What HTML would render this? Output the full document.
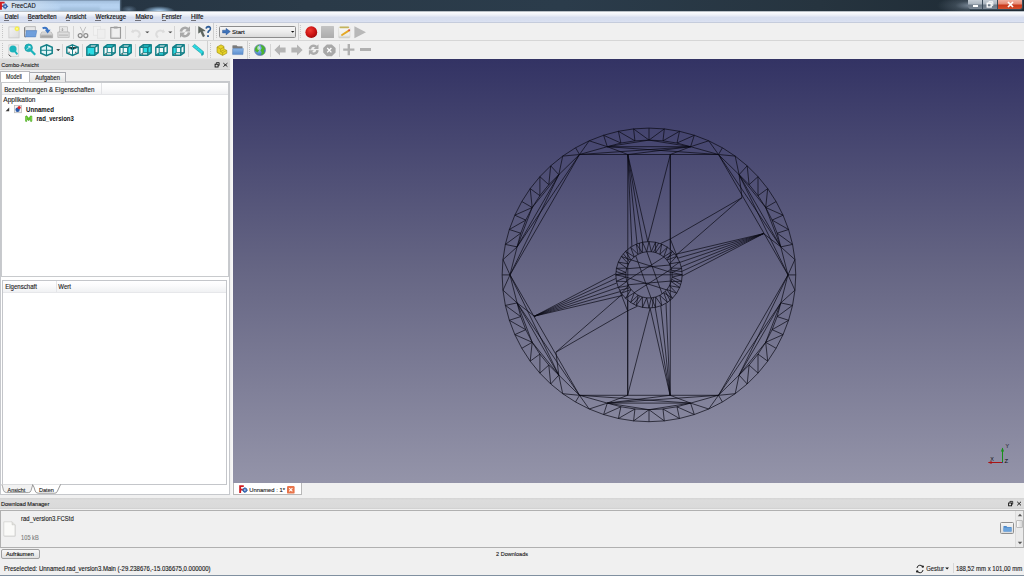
<!DOCTYPE html>
<html><head><meta charset="utf-8"><style>
html,body{margin:0;padding:0;width:1024px;height:576px;overflow:hidden;background:#f0f0f0;position:relative}
.t{position:absolute;white-space:nowrap;line-height:1;font-family:"Liberation Sans",sans-serif}
svg{overflow:visible}
</style></head><body>
<div style="position:absolute;left:0px;top:0px;width:1024px;height:11px;background:linear-gradient(90deg,#243240 0%,#2a3a48 30%,#2b3c4b 55%,#26343f 80%,#1e2a34 100%)"></div>
<div style="position:absolute;left:0px;top:0px;width:120px;height:10.8px;background:linear-gradient(180deg,#6f86a0 0%,#a4c0de 12%,#b4d0ee 40%,#b6d2f0 70%,#aac6e4 92%,#98aec4 100%)"></div>
<div style="position:absolute;left:119px;top:0px;width:3px;height:11px;background:linear-gradient(90deg,rgba(150,180,210,0.6),rgba(40,56,70,0))"></div>
<div style="position:absolute;left:143px;top:4px;width:32px;height:7px;background:radial-gradient(ellipse 50% 70% at 50% 100%,#b4d2f0 0%,rgba(150,190,225,0.7) 45%,rgba(40,56,70,0) 100%)"></div>
<div style="position:absolute;left:121px;top:4px;width:16px;height:7px;background:radial-gradient(ellipse 50% 60% at 50% 80%,rgba(130,160,190,0.55) 0%,rgba(40,56,70,0) 100%)"></div>
<div style="position:absolute;left:60px;top:7px;width:40px;height:3px;background:rgba(120,150,180,0.25);filter:blur(1px)"></div>
<div style="position:absolute;left:0px;top:1px;width:60px;height:9.5px;background:linear-gradient(90deg,rgba(226,234,244,0.85) 0%,rgba(214,228,242,0.6) 45%,rgba(190,214,240,0) 100%)"></div>
<svg style="position:absolute;left:0px;top:0px;" width="10" height="11" viewBox="0 0 10 11"><path d="M0 1.8 H4.6 V3.5 H1.9 V5.4 H4 V7 H1.9 V9.8 H0Z" fill="#d01c20"/><g transform="translate(5.2 6.4)"><circle r="2.1" fill="#3a68b0"/><path d="M-0.6 -2.9 H0.6 V2.9 H-0.6Z M-2.9 -0.6 V0.6 H2.9 V-0.6Z M-2.1 -1.3 L-1.3 -2.1 L2.1 1.3 L1.3 2.1Z M2.1 -1.3 L1.3 -2.1 L-2.1 1.3 L-1.3 2.1Z" fill="#3a68b0"/><circle r="0.8" fill="#c8d8ea"/></g></svg>
<div style="position:absolute;left:915px;top:0px;width:55px;height:11px;background:radial-gradient(ellipse 60% 90% at 100% 50%,rgba(150,165,182,0.75) 0%,rgba(110,125,140,0.35) 45%,rgba(40,52,64,0) 100%)"></div>
<div style="position:absolute;left:967.5px;top:0px;width:55px;height:9.6px;background:#3a4a58;border-radius:0 0 3px 3px"></div>
<div style="position:absolute;left:968.3px;top:0px;width:14px;height:8.8px;background:linear-gradient(180deg,#c4ccd4 0%,#aab4be 45%,#6c7986 55%,#7c8894 100%);border-radius:0 0 0 2.5px"></div>
<div style="position:absolute;left:972.8px;top:5.2px;width:5.6px;height:1.6px;background:#fff;box-shadow:0 0 0.6px #333"></div>
<div style="position:absolute;left:983px;top:0px;width:13.8px;height:8.8px;background:linear-gradient(180deg,#c4ccd4 0%,#aab4be 45%,#6c7986 55%,#7c8894 100%)"></div>
<svg style="position:absolute;left:986px;top:1px;" width="8" height="7" viewBox="0 0 8 7"><rect x="1.2" y="2.2" width="4" height="3.8" fill="none" stroke="#fff" stroke-width="1.3"/><path d="M2.8 1.6 V0.8 H6.8 V4.6 H6" fill="none" stroke="#fff" stroke-width="1"/></svg>
<div style="position:absolute;left:997.5px;top:0px;width:24.5px;height:8.8px;background:linear-gradient(180deg,#f0b0a0 0%,#e48a74 45%,#c8381c 55%,#d4502e 100%);border-radius:0 0 2.5px 0"></div>
<svg style="position:absolute;left:1005.5px;top:1.2px;" width="9" height="7" viewBox="0 0 9 7"><path d="M2 1 L7 6 M7 1 L2 6" stroke="#fff" stroke-width="1.7"/></svg>
<div style="position:absolute;left:0px;top:10.6px;width:1024px;height:1.4px;background:linear-gradient(180deg,#8a949e,#e8ecf0)"></div>
<div style="position:absolute;left:0px;top:12px;width:1024px;height:10.5px;background:linear-gradient(180deg,#fbfcfe 0%,#eef1f8 25%,#d7deef 50%,#d8dff0 80%,#e0e6f4 100%)"></div>
<div style="position:absolute;left:0px;top:22.4px;width:1024px;height:0.8px;background:#c5ccdc"></div>
<div style="position:absolute;left:4.3999999999999995px;top:19.6px;width:4.6998286203941735px;height:0.7px;background:#707078"></div>
<div style="position:absolute;left:27.5px;top:19.6px;width:4.398966301426505px;height:0.7px;background:#707078"></div>
<div style="position:absolute;left:65.6px;top:19.6px;width:4.549679780420861px;height:0.7px;background:#707078"></div>
<div style="position:absolute;left:95.39999999999999px;top:19.6px;width:6.093968253968254px;height:0.7px;background:#707078"></div>
<div style="position:absolute;left:135.2px;top:19.6px;width:5.677465802735786px;height:0.7px;background:#707078"></div>
<div style="position:absolute;left:161.6px;top:19.6px;width:3.98669616519174px;height:0.7px;background:#707078"></div>
<div style="position:absolute;left:190.9px;top:19.6px;width:4.838080959520233px;height:0.7px;background:#707078"></div>
<div style="position:absolute;left:0px;top:23px;width:1024px;height:17.2px;background:#f0f0f0"></div>
<div style="position:absolute;left:0px;top:40.2px;width:1024px;height:0.9px;background:#d6d6d6"></div>
<div style="position:absolute;left:0px;top:41px;width:1024px;height:18px;background:#f0f0f0"></div>
<svg style="position:absolute;left:0px;top:0px;left:0;top:0" width="1" height="1" viewBox="0 0 1 1"><rect x="2.1" y="25.2" width="0.9" height="0.8" fill="#b4b4b4"/><rect x="2.1" y="27.1" width="0.9" height="0.8" fill="#b4b4b4"/><rect x="2.1" y="29.1" width="0.9" height="0.8" fill="#b4b4b4"/><rect x="2.1" y="31.0" width="0.9" height="0.8" fill="#b4b4b4"/><rect x="2.1" y="33.0" width="0.9" height="0.8" fill="#b4b4b4"/><rect x="2.1" y="35.0" width="0.9" height="0.8" fill="#b4b4b4"/><rect x="2.1" y="36.9" width="0.9" height="0.8" fill="#b4b4b4"/></svg>
<svg style="position:absolute;left:0px;top:0px;left:0;top:0" width="1" height="1" viewBox="0 0 1 1"><rect x="216.1" y="25.2" width="0.9" height="0.8" fill="#b4b4b4"/><rect x="216.1" y="27.1" width="0.9" height="0.8" fill="#b4b4b4"/><rect x="216.1" y="29.1" width="0.9" height="0.8" fill="#b4b4b4"/><rect x="216.1" y="31.0" width="0.9" height="0.8" fill="#b4b4b4"/><rect x="216.1" y="33.0" width="0.9" height="0.8" fill="#b4b4b4"/><rect x="216.1" y="35.0" width="0.9" height="0.8" fill="#b4b4b4"/><rect x="216.1" y="36.9" width="0.9" height="0.8" fill="#b4b4b4"/></svg>
<svg style="position:absolute;left:0px;top:0px;left:0;top:0" width="1" height="1" viewBox="0 0 1 1"><rect x="299.9" y="25.2" width="0.9" height="0.8" fill="#b4b4b4"/><rect x="299.9" y="27.1" width="0.9" height="0.8" fill="#b4b4b4"/><rect x="299.9" y="29.1" width="0.9" height="0.8" fill="#b4b4b4"/><rect x="299.9" y="31.0" width="0.9" height="0.8" fill="#b4b4b4"/><rect x="299.9" y="33.0" width="0.9" height="0.8" fill="#b4b4b4"/><rect x="299.9" y="35.0" width="0.9" height="0.8" fill="#b4b4b4"/><rect x="299.9" y="36.9" width="0.9" height="0.8" fill="#b4b4b4"/></svg>
<svg style="position:absolute;left:0px;top:0px;left:0;top:0" width="1" height="1" viewBox="0 0 1 1"><rect x="2.1" y="43.2" width="0.9" height="0.8" fill="#b4b4b4"/><rect x="2.1" y="45.2" width="0.9" height="0.8" fill="#b4b4b4"/><rect x="2.1" y="47.1" width="0.9" height="0.8" fill="#b4b4b4"/><rect x="2.1" y="49.1" width="0.9" height="0.8" fill="#b4b4b4"/><rect x="2.1" y="51.0" width="0.9" height="0.8" fill="#b4b4b4"/><rect x="2.1" y="53.0" width="0.9" height="0.8" fill="#b4b4b4"/><rect x="2.1" y="54.9" width="0.9" height="0.8" fill="#b4b4b4"/><rect x="2.1" y="56.9" width="0.9" height="0.8" fill="#b4b4b4"/></svg>
<svg style="position:absolute;left:0px;top:0px;left:0;top:0" width="1" height="1" viewBox="0 0 1 1"><rect x="210.1" y="43.2" width="0.9" height="0.8" fill="#b4b4b4"/><rect x="210.1" y="45.2" width="0.9" height="0.8" fill="#b4b4b4"/><rect x="210.1" y="47.1" width="0.9" height="0.8" fill="#b4b4b4"/><rect x="210.1" y="49.1" width="0.9" height="0.8" fill="#b4b4b4"/><rect x="210.1" y="51.0" width="0.9" height="0.8" fill="#b4b4b4"/><rect x="210.1" y="53.0" width="0.9" height="0.8" fill="#b4b4b4"/><rect x="210.1" y="54.9" width="0.9" height="0.8" fill="#b4b4b4"/><rect x="210.1" y="56.9" width="0.9" height="0.8" fill="#b4b4b4"/></svg>
<svg style="position:absolute;left:0px;top:0px;left:0;top:0" width="1" height="1" viewBox="0 0 1 1"><rect x="249.1" y="43.2" width="0.9" height="0.8" fill="#b4b4b4"/><rect x="249.1" y="45.2" width="0.9" height="0.8" fill="#b4b4b4"/><rect x="249.1" y="47.1" width="0.9" height="0.8" fill="#b4b4b4"/><rect x="249.1" y="49.1" width="0.9" height="0.8" fill="#b4b4b4"/><rect x="249.1" y="51.0" width="0.9" height="0.8" fill="#b4b4b4"/><rect x="249.1" y="53.0" width="0.9" height="0.8" fill="#b4b4b4"/><rect x="249.1" y="54.9" width="0.9" height="0.8" fill="#b4b4b4"/><rect x="249.1" y="56.9" width="0.9" height="0.8" fill="#b4b4b4"/></svg>
<div style="position:absolute;left:72.6px;top:26px;width:0.9px;height:12.5px;background:#d4d4d4"></div>
<div style="position:absolute;left:125.4px;top:26px;width:0.9px;height:12.5px;background:#d4d4d4"></div>
<div style="position:absolute;left:174.4px;top:26px;width:0.9px;height:12.5px;background:#d4d4d4"></div>
<div style="position:absolute;left:194.6px;top:26px;width:0.9px;height:12.5px;background:#d4d4d4"></div>
<div style="position:absolute;left:62.4px;top:44px;width:0.9px;height:12.5px;background:#d4d4d4"></div>
<div style="position:absolute;left:82.4px;top:44px;width:0.9px;height:12.5px;background:#d4d4d4"></div>
<div style="position:absolute;left:135.4px;top:44px;width:0.9px;height:12.5px;background:#d4d4d4"></div>
<div style="position:absolute;left:187.6px;top:44px;width:0.9px;height:12.5px;background:#d4d4d4"></div>
<div style="position:absolute;left:270.1px;top:44px;width:0.9px;height:12.5px;background:#d4d4d4"></div>
<div style="position:absolute;left:339.4px;top:44px;width:0.9px;height:12.5px;background:#d4d4d4"></div>
<div style="position:absolute;left:213.2px;top:23.3px;width:0.9px;height:16.900000000000002px;background:#d0d0d0"></div>
<div style="position:absolute;left:297.5px;top:23.3px;width:0.9px;height:16.900000000000002px;background:#d0d0d0"></div>
<div style="position:absolute;left:207.2px;top:41px;width:0.9px;height:18px;background:#d0d0d0"></div>
<div style="position:absolute;left:246.5px;top:41px;width:0.9px;height:18px;background:#d0d0d0"></div>
<svg style="position:absolute;left:7.5px;top:25.5px;" width="13" height="13" viewBox="0 0 13 13"><defs><linearGradient id="gnew" x1="0" y1="0" x2="1" y2="1"><stop offset="0" stop-color="#f4f4f4"/><stop offset="1" stop-color="#dcdcdc"/></linearGradient><radialGradient id="gsun"><stop offset="0" stop-color="#ffffc0"/><stop offset="0.5" stop-color="#f8f040"/><stop offset="1" stop-color="#f0e830" stop-opacity="0"/></radialGradient></defs><rect x="0.9" y="0.9" width="10.2" height="11" fill="url(#gnew)" stroke="#c4c4c4" stroke-width="0.7"/><circle cx="9" cy="2.8" r="3" fill="url(#gsun)"/></svg>
<svg style="position:absolute;left:23.5px;top:25.5px;" width="14" height="12" viewBox="0 0 14 12"><path d="M0.8 2 L1.6 0.6 H11.4 V5 H0.8Z" fill="#e6e6e6" stroke="#9a9a9a" stroke-width="0.6"/><path d="M0.6 1.2 V10.8 H2" fill="none" stroke="#707070" stroke-width="0.9"/><path d="M2.2 4.6 H12.8 L11.6 10.9 H1.6Z" fill="#6f9fdc" stroke="#4a78b8" stroke-width="0.5"/></svg>
<svg style="position:absolute;left:39.5px;top:25.5px;" width="14" height="13" viewBox="0 0 14 13"><defs><linearGradient id="gtray" x1="0" y1="0" x2="0" y2="1"><stop offset="0" stop-color="#e8e8e8"/><stop offset="1" stop-color="#a4a4a4"/></linearGradient></defs><path d="M1.8 6 H11.2 L12.6 8.4 V11.8 H0.4 V8.4Z" fill="url(#gtray)" stroke="#9a9a9a" stroke-width="0.5"/><rect x="1.4" y="9.6" width="10.2" height="1" fill="#8e8e8e" opacity="0.6"/><path d="M2.6 2.2 Q6.8 0.6 7.6 4.4" fill="none" stroke="#3a74c4" stroke-width="2.2"/><path d="M4.8 3.8 H10.6 L7.6 7.6Z" fill="#3a74c4"/></svg>
<svg style="position:absolute;left:56.8px;top:25.5px;" width="13" height="13" viewBox="0 0 13 13"><rect x="2.6" y="0.8" width="7.8" height="5.4" fill="#e8e8e8" stroke="#b0b0b0" stroke-width="0.6"/><path d="M5.4 2 V4.6 M4.2 3.6 L5.4 4.8 L6.6 3.6" stroke="#9a9a9a" stroke-width="0.7" fill="none"/><path d="M0.8 6 H12.2 V11.4 H0.8Z" fill="#dedede" stroke="#a8a8a8" stroke-width="0.6"/><rect x="1.8" y="8.6" width="9.4" height="1" fill="#b4b4b4"/></svg>
<svg style="position:absolute;left:76.5px;top:25.5px;" width="12" height="13" viewBox="0 0 12 13"><path d="M3.2 0.8 L6.4 7.6 M8.8 0.8 L5.6 7.6" stroke="#bcbcbc" stroke-width="0.9" fill="none"/><circle cx="3.2" cy="9.6" r="2" fill="none" stroke="#8a8a8a" stroke-width="1.2"/><circle cx="8.8" cy="9.6" r="2" fill="none" stroke="#8a8a8a" stroke-width="1.2"/></svg>
<svg style="position:absolute;left:92.5px;top:25.5px;" width="13" height="13" viewBox="0 0 13 13"><rect x="0.6" y="0.6" width="7" height="8.6" fill="#f2f2f2" stroke="#e0e0e0" stroke-width="0.6"/><rect x="4.4" y="3.2" width="7.6" height="9" fill="#eeeeee" stroke="#dedede" stroke-width="0.6"/></svg>
<svg style="position:absolute;left:109.6px;top:25.5px;" width="12" height="13" viewBox="0 0 12 13"><rect x="0.8" y="1.4" width="9.8" height="10.8" fill="#e4e4e4" stroke="#8e8e8e" stroke-width="0.9"/><rect x="2.4" y="3" width="6.6" height="7.8" fill="#efefef"/><rect x="3.6" y="0.4" width="4.2" height="2" rx="0.6" fill="#a0a0a0"/></svg>
<svg style="position:absolute;left:129.5px;top:25.5px;" width="12" height="13" viewBox="0 0 12 13"><path d="M3 3 L0.8 6 L3.8 7.2" fill="#dcdcdc"/><path d="M2.4 5.8 Q6 3 9 6 Q11 9 8 11.4" fill="none" stroke="#dcdcdc" stroke-width="2"/></svg>
<svg style="position:absolute;left:144.6px;top:30.8px;" width="5" height="3" viewBox="0 0 5 3"><path d="M0.2 0.4 H4.4 L2.3 2.2Z" fill="#4a4a4a"/></svg>
<svg style="position:absolute;left:153.5px;top:25.5px;" width="12" height="13" viewBox="0 0 12 13"><path d="M9 3 L11.2 6 L8.2 7.2" fill="#dcdcdc"/><path d="M9.6 5.8 Q6 3 3 6 Q1 9 4 11.4" fill="none" stroke="#dcdcdc" stroke-width="2"/></svg>
<svg style="position:absolute;left:167.7px;top:30.8px;" width="5" height="3" viewBox="0 0 5 3"><path d="M0.2 0.4 H4.4 L2.3 2.2Z" fill="#4a4a4a"/></svg>
<svg style="position:absolute;left:178.8px;top:25.6px;" width="12" height="12" viewBox="0 0 12 12"><path d="M2 5.6 A4 4 0 0 1 8.8 3" fill="none" stroke="#a8a8a8" stroke-width="2.6"/><path d="M11 0.2 V5.4 H5.8Z" fill="#a8a8a8"/><path d="M10 6.4 A4 4 0 0 1 3.2 9" fill="none" stroke="#a8a8a8" stroke-width="2.6"/><path d="M1 11.8 V6.6 H6.2Z" fill="#a8a8a8"/></svg>
<svg style="position:absolute;left:197.5px;top:25.5px;" width="14" height="13" viewBox="0 0 14 13"><path d="M0.6 0.6 L0.6 7.2 L2.6 5.6 L5 10.8 L6.6 10 L4.4 5 L7.2 4.8Z" fill="#5e6660" stroke="#4a524c" stroke-width="0.5"/><path d="M8.2 2.6 Q8.4 0.6 10.4 0.6 Q12.6 0.8 12.4 2.8 Q12.2 4.2 10.8 5 Q10 5.6 10 7" fill="none" stroke="#2c5c98" stroke-width="1.6"/><rect x="9.1" y="9.2" width="1.8" height="1.8" fill="#2c5c98"/></svg>
<div style="position:absolute;left:219.1px;top:26.1px;width:77.2px;height:11.5px;background:linear-gradient(180deg,#f6f6f6 0%,#ececec 50%,#dadada 100%);border:1px solid #8c8c8c;border-radius:1.5px;box-sizing:border-box"></div>
<svg style="position:absolute;left:222px;top:28.2px;" width="9" height="7.2" viewBox="0 0 9 7.2"><path d="M0.5 2.2 H4 V0.3 L8.4 3.6 L4 6.9 V5 H0.5Z" fill="#3e72b8" stroke="#2a5290" stroke-width="0.4"/></svg>
<svg style="position:absolute;left:290.5px;top:31.2px;" width="4" height="2" viewBox="0 0 4 2"><path d="M0 0 H3.4 L1.7 1.8Z" fill="#111"/></svg>
<svg style="position:absolute;left:304.6px;top:25.8px;" width="13" height="13" viewBox="0 0 13 13"><defs><radialGradient id="grec" cx="0.4" cy="0.35" r="0.7"><stop offset="0" stop-color="#f03a30"/><stop offset="0.6" stop-color="#cc1414"/><stop offset="1" stop-color="#9a0a0a"/></radialGradient></defs><circle cx="6.3" cy="6.2" r="5.9" fill="url(#grec)"/></svg>
<div style="position:absolute;left:321.3px;top:26.1px;width:12.5px;height:11.6px;background:linear-gradient(180deg,#c4c4c4,#acacac);border-radius:0.5px"></div>
<svg style="position:absolute;left:337.6px;top:25.6px;" width="13" height="13" viewBox="0 0 13 13"><defs><linearGradient id="gpad" x1="0" y1="0" x2="0" y2="1"><stop offset="0" stop-color="#f8f8f6"/><stop offset="0.75" stop-color="#ececea"/><stop offset="1" stop-color="#c8c8c6"/></linearGradient></defs><rect x="0.6" y="1.2" width="11.4" height="10.8" rx="1" fill="url(#gpad)" stroke="#d0d0cc" stroke-width="0.5"/><rect x="1.6" y="0.4" width="9.4" height="1.8" rx="0.6" fill="#c4b45c"/><path d="M4 9 L10.8 4.6" stroke="#e4a824" stroke-width="1.9" stroke-linecap="round"/><circle cx="11.2" cy="4.3" r="1" fill="#e05040"/></svg>
<svg style="position:absolute;left:354px;top:25.8px;" width="13" height="13" viewBox="0 0 13 13"><path d="M0.4 0.2 L12 6.2 L0.4 12.2Z" fill="#b8b8b8"/></svg>
<svg style="position:absolute;left:7.8px;top:43.5px;" width="12" height="13.5" viewBox="0 0 12 13.5"><path d="M0.8 0.8 H10.6 V12.6 H2.4 L0.8 11Z" fill="#ececec" stroke="#c8c8c8" stroke-width="0.7"/><path d="M0.8 10.6 L2.8 12.6" stroke="#404040" stroke-width="1"/><circle cx="5" cy="5" r="3.6" fill="#1cb4bc"/><path d="M7 7.4 L9.4 10.4" stroke="#1cb4bc" stroke-width="1.8"/></svg>
<svg style="position:absolute;left:23.6px;top:43.3px;" width="13" height="13" viewBox="0 0 13 13"><circle cx="4.6" cy="4.8" r="3.8" fill="#1cb4bc" stroke="#159ca4" stroke-width="0.8"/><path d="M6.8 7.2 L11.2 11.8" stroke="#1cb4bc" stroke-width="2.2"/><path d="M2.8 6.6 L5.8 3.6 M4.2 3.4 H6 V5.2" stroke="#fff" stroke-width="0.8" fill="none"/></svg>
<svg style="position:absolute;left:40px;top:43.8px;" width="13" height="12.6" viewBox="0 0 13 12.6"><path d="M6.5 0.8 L12.2 3.3 V9.3 L6.5 11.8 L0.8 9.3 V3.3Z" fill="#e0f6f8" stroke="#148088" stroke-width="1.5"/><path d="M6.5 0.8 V11.8 M0.8 6.3 H12.2" stroke="#148088" stroke-width="1.1"/></svg>
<svg style="position:absolute;left:55.8px;top:49px;" width="5" height="3" viewBox="0 0 5 3"><path d="M0.2 0.2 H4.2 L2.2 2Z" fill="#222"/></svg>
<svg style="position:absolute;left:66px;top:43.8px;" width="13" height="12.2" viewBox="0 0 13 12.2"><path d="M6.5 0.8 L12.2 3.2 V9 L6.5 11.4 L0.8 9 V3.2Z" fill="#f4fafa" stroke="#148088" stroke-width="1.4"/><path d="M6.5 0.8 V11.4 M0.8 3.2 L6.5 5.6 L12.2 3.2" stroke="#148088" stroke-width="1"/><rect x="2.4" y="7.8" width="1.4" height="0.9" fill="#333"/><rect x="9" y="7.8" width="1.4" height="0.9" fill="#333"/></svg>
<svg style="position:absolute;left:85.6px;top:43.8px;" width="13" height="13" viewBox="0 0 13 13"><path d="M0.8 3.3 L4.2 0.7999999999999998 H12.200000000000001 V8.7 L8.8 11.2 H0.8Z" fill="#f6f8f8"/><path d="M4.2 0.7999999999999998 V8.7 H12.200000000000001 M4.2 8.7 L0.8 11.2" fill="none" stroke="#148088" stroke-width="1"/><rect x="0.8" y="3.3" width="8.0" height="7.8999999999999995" fill="#2adce4"/><path d="M0.8 3.3 H8.8 V11.2 H0.8Z M0.8 3.3 L4.2 0.7999999999999998 H12.200000000000001 V8.7 L8.8 11.2 M8.8 3.3 L12.200000000000001 0.7999999999999998" fill="none" stroke="#148088" stroke-width="1.45" stroke-linejoin="round"/><rect x="2.8" y="9.6" width="1.4" height="0.9" fill="#333"/></svg>
<svg style="position:absolute;left:102.6px;top:43.8px;" width="13" height="13" viewBox="0 0 13 13"><path d="M0.8 3.3 L4.2 0.7999999999999998 H12.200000000000001 V8.7 L8.8 11.2 H0.8Z" fill="#f6f8f8"/><path d="M4.2 0.7999999999999998 V8.7 H12.200000000000001 M4.2 8.7 L0.8 11.2" fill="none" stroke="#148088" stroke-width="1"/><path d="M0.8 3.3 L4.2 0.7999999999999998 H12.200000000000001 L8.8 3.3Z" fill="#2adce4"/><path d="M0.8 3.3 H8.8 V11.2 H0.8Z M0.8 3.3 L4.2 0.7999999999999998 H12.200000000000001 V8.7 L8.8 11.2 M8.8 3.3 L12.200000000000001 0.7999999999999998" fill="none" stroke="#148088" stroke-width="1.45" stroke-linejoin="round"/><rect x="2.8" y="9.6" width="1.4" height="0.9" fill="#333"/></svg>
<svg style="position:absolute;left:119px;top:43.8px;" width="13" height="13" viewBox="0 0 13 13"><path d="M0.8 3.3 L4.2 0.7999999999999998 H12.200000000000001 V8.7 L8.8 11.2 H0.8Z" fill="#f6f8f8"/><path d="M4.2 0.7999999999999998 V8.7 H12.200000000000001 M4.2 8.7 L0.8 11.2" fill="none" stroke="#148088" stroke-width="1"/><path d="M8.8 3.3 L12.200000000000001 0.7999999999999998 V8.7 L8.8 11.2Z" fill="#2adce4"/><path d="M0.8 3.3 H8.8 V11.2 H0.8Z M0.8 3.3 L4.2 0.7999999999999998 H12.200000000000001 V8.7 L8.8 11.2 M8.8 3.3 L12.200000000000001 0.7999999999999998" fill="none" stroke="#148088" stroke-width="1.45" stroke-linejoin="round"/><rect x="2.8" y="9.6" width="1.4" height="0.9" fill="#333"/></svg>
<svg style="position:absolute;left:138.6px;top:43.8px;" width="13" height="13" viewBox="0 0 13 13"><path d="M0.8 3.3 L4.2 0.7999999999999998 H12.200000000000001 V8.7 L8.8 11.2 H0.8Z" fill="#f6f8f8"/><rect x="4.2" y="0.7999999999999998" width="8.0" height="7.8999999999999995" fill="#2adce4"/><path d="M4.2 0.7999999999999998 V8.7 H12.200000000000001 M4.2 8.7 L0.8 11.2" fill="none" stroke="#148088" stroke-width="1"/><path d="M0.8 3.3 H8.8 V11.2 H0.8Z M0.8 3.3 L4.2 0.7999999999999998 H12.200000000000001 V8.7 L8.8 11.2 M8.8 3.3 L12.200000000000001 0.7999999999999998" fill="none" stroke="#148088" stroke-width="1.45" stroke-linejoin="round"/><rect x="2.8" y="9.6" width="1.4" height="0.9" fill="#333"/></svg>
<svg style="position:absolute;left:155.2px;top:43.8px;" width="13" height="13" viewBox="0 0 13 13"><path d="M0.8 3.3 L4.2 0.7999999999999998 H12.200000000000001 V8.7 L8.8 11.2 H0.8Z" fill="#f6f8f8"/><path d="M0.8 11.2 L4.2 8.7 H12.200000000000001 L8.8 11.2Z" fill="#2adce4"/><path d="M4.2 0.7999999999999998 V8.7 H12.200000000000001 M4.2 8.7 L0.8 11.2" fill="none" stroke="#148088" stroke-width="1"/><path d="M0.8 3.3 H8.8 V11.2 H0.8Z M0.8 3.3 L4.2 0.7999999999999998 H12.200000000000001 V8.7 L8.8 11.2 M8.8 3.3 L12.200000000000001 0.7999999999999998" fill="none" stroke="#148088" stroke-width="1.45" stroke-linejoin="round"/><rect x="2.8" y="9.6" width="1.4" height="0.9" fill="#333"/></svg>
<svg style="position:absolute;left:171.6px;top:43.8px;" width="13" height="13" viewBox="0 0 13 13"><path d="M0.8 3.3 L4.2 0.7999999999999998 H12.200000000000001 V8.7 L8.8 11.2 H0.8Z" fill="#f6f8f8"/><path d="M0.8 3.3 L4.2 0.7999999999999998 V8.7 L0.8 11.2Z" fill="#2adce4"/><path d="M4.2 0.7999999999999998 V8.7 H12.200000000000001 M4.2 8.7 L0.8 11.2" fill="none" stroke="#148088" stroke-width="1"/><path d="M0.8 3.3 H8.8 V11.2 H0.8Z M0.8 3.3 L4.2 0.7999999999999998 H12.200000000000001 V8.7 L8.8 11.2 M8.8 3.3 L12.200000000000001 0.7999999999999998" fill="none" stroke="#148088" stroke-width="1.45" stroke-linejoin="round"/><rect x="2.8" y="9.6" width="1.4" height="0.9" fill="#333"/></svg>
<svg style="position:absolute;left:191.5px;top:44.2px;" width="12" height="12" viewBox="0 0 12 12"><path d="M0.4 2.4 L2.6 0.2 L11.4 7.6 V10.4 L9.8 11.6 L9.4 9.8Z" fill="#2adce4" stroke="#148088" stroke-width="0.5"/><path d="M9.4 9.8 L11.4 7.6 V10.4 L9.8 11.6Z" fill="#18a8b0"/><path d="M3 3.2 L3.8 2.4 M5 4.8 L5.8 4 M7 6.4 L7.8 5.6" stroke="#148088" stroke-width="0.4"/></svg>
<svg style="position:absolute;left:215.6px;top:44px;" width="12" height="12" viewBox="0 0 12 12"><path d="M1 3 L5 0.8 L8 2.4 V5 L10.8 6.4 V9.2 L6.6 11.4 L1 8.4Z" fill="#e8d428" stroke="#9a8a10" stroke-width="0.6"/><path d="M1 3 L4.6 5 L8 3.2 M4.6 5 V7.6 L8 5.8 M4.6 7.6 L6.6 8.6 L10.8 6.4 M6.6 8.6 V11.4" fill="none" stroke="#a89418" stroke-width="0.6"/></svg>
<svg style="position:absolute;left:231.6px;top:45px;" width="12" height="10" viewBox="0 0 12 10"><defs><linearGradient id="gfold" x1="0" y1="0" x2="0" y2="1"><stop offset="0" stop-color="#8cb8ea"/><stop offset="1" stop-color="#5a8ccc"/></linearGradient></defs><path d="M0.6 0.4 H4.6 L5.6 1.6 H10.4 V9 H0.6Z" fill="#9a9a9a"/><path d="M0.6 0.4 H4.6 L5.6 1.6 H10.4 V3 H0.6Z" fill="#7a7a7a"/><path d="M0.8 3.6 H11.4 L11 9.6 H0.6Z" fill="url(#gfold)" stroke="#4a7ab8" stroke-width="0.4"/></svg>
<svg style="position:absolute;left:254.2px;top:43.6px;" width="12.5" height="12.5" viewBox="0 0 12.5 12.5"><defs><radialGradient id="gglb" cx="0.4" cy="0.4" r="0.7"><stop offset="0" stop-color="#9fd0ff"/><stop offset="1" stop-color="#2a62b0"/></radialGradient></defs><circle cx="6" cy="6" r="5.6" fill="url(#gglb)" stroke="#7a8aa0" stroke-width="0.6"/><path d="M1 4.4 Q2.4 1.4 5 0.8 L4.6 3.4 L5.6 5.6 L3.6 8.4 L1.2 7Z M6.4 0.8 Q10 1.4 11.2 4.8 L9.8 6.8 L10.6 9.2 Q8.8 11 7 11 L7.8 8.2 L6.4 6.4 L7.8 4 Z" fill="#4cb42c"/><ellipse cx="4.6" cy="4" rx="1.4" ry="2" fill="#dfefff" opacity="0.7"/></svg>
<svg style="position:absolute;left:274.4px;top:43.6px;" width="12" height="12" viewBox="0 0 12 12"><path d="M0.4 6 L6 0.4 V3.6 H11.6 V8.4 H6 V11.6Z" fill="#b4b4b4"/></svg>
<svg style="position:absolute;left:290.6px;top:43.6px;" width="12" height="12" viewBox="0 0 12 12"><path d="M11.6 6 L6 0.4 V3.6 H0.4 V8.4 H6 V11.6Z" fill="#b4b4b4"/></svg>
<svg style="position:absolute;left:307.8px;top:43.8px;" width="11.4" height="11.4" viewBox="0 0 11.4 11.4"><path d="M1.9 5.3 A3.8 3.8 0 0 1 8.4 2.9" fill="none" stroke="#acacac" stroke-width="2.4"/><path d="M10.5 0.2 V5.1 H5.6Z" fill="#acacac"/><path d="M9.5 6.1 A3.8 3.8 0 0 1 3 8.5" fill="none" stroke="#acacac" stroke-width="2.4"/><path d="M0.9 11.2 V6.3 H5.8Z" fill="#acacac"/></svg>
<svg style="position:absolute;left:323.2px;top:43.6px;" width="13" height="12.4" viewBox="0 0 13 12.4"><path d="M3.8 0.4 H8.8 L12.6 4 V8.6 L8.8 12.2 H3.8 L0.2 8.6 V4Z" fill="#a8a8a8"/><path d="M4.2 4 L8.4 8.4 M8.4 4 L4.2 8.4" stroke="#fff" stroke-width="1.3"/></svg>
<svg style="position:absolute;left:343.4px;top:44.2px;" width="12" height="12" viewBox="0 0 12 12"><path d="M4.6 0 H7 V4.4 H11.4 V6.8 H7 V11.2 H4.6 V6.8 H0.2 V4.4 H4.6Z" fill="#b0b0b0"/></svg>
<div style="position:absolute;left:359.8px;top:48px;width:11.7px;height:3.2px;background:#b0b0b0"></div>
<div style="position:absolute;left:0px;top:59px;width:232px;height:437px;background:#f0f0f0"></div>
<div style="position:absolute;left:0px;top:57.8px;width:231px;height:2.6px;background:linear-gradient(180deg,#ebebeb,#d8d8d8)"></div>
<div style="position:absolute;left:0.3px;top:60.2px;width:230.2px;height:9.2px;background:#dadada;border-radius:1px"></div>
<div style="position:absolute;left:0.3px;top:69.2px;width:230.2px;height:0.8px;background:#cecece"></div>
<svg style="position:absolute;left:214px;top:61px;" width="16" height="8" viewBox="0 0 16 8"><rect x="1.1" y="3.2" width="3" height="2.8" fill="none" stroke="#111" stroke-width="0.9"/><path d="M2.4 2.8 V1.6 H5.2 V4.4 H4.4" fill="none" stroke="#111" stroke-width="0.8"/><path d="M9.4 2.2 L13.4 5.6 M13.4 2.2 L9.4 5.6" stroke="#111" stroke-width="0.9"/></svg>
<div style="position:absolute;left:0px;top:81px;width:230px;height:414px;background:#fff;border:1px solid #c6c8cc;box-sizing:border-box"></div>
<div style="position:absolute;left:29.2px;top:72.4px;width:37px;height:9.2px;background:linear-gradient(180deg,#f8f8f8,#e4e4e4);border:1px solid #a8aab0;border-bottom:none;box-sizing:border-box"></div>
<div style="position:absolute;left:0px;top:71.3px;width:29.8px;height:11.2px;background:#fff;border:1px solid #b8b8bc;border-bottom:none;box-sizing:border-box"></div>
<div style="position:absolute;left:1px;top:82px;width:228.2px;height:194.6px;background:#fff;border:1px solid #c8cacd;box-sizing:border-box"></div>
<div style="position:absolute;left:2px;top:83px;width:99.5px;height:11.5px;background:linear-gradient(180deg,#ffffff 0%,#fafafb 50%,#eeeff1 100%)"></div>
<div style="position:absolute;left:101.5px;top:83px;width:126.7px;height:11.5px;background:linear-gradient(180deg,#ffffff 0%,#fafafb 50%,#eeeff1 100%)"></div>
<div style="position:absolute;left:101.3px;top:83px;width:0.8px;height:11.5px;background:#e2e3e6"></div>
<div style="position:absolute;left:2px;top:94.2px;width:226.2px;height:0.8px;background:#e3e4e7"></div>
<svg style="position:absolute;left:5px;top:107px;" width="5" height="5" viewBox="0 0 5 5"><path d="M4.2 0.6 V4.2 H0.6Z" fill="#3a3a3a"/></svg>
<svg style="position:absolute;left:14px;top:105.3px;" width="8" height="8.2" viewBox="0 0 8 8.2"><rect x="0.5" y="0.5" width="7" height="7.2" fill="#f4f4f4" stroke="#b8b8b8" stroke-width="0.8"/><circle cx="3.6" cy="4.8" r="2.2" fill="#2a5aa8"/><circle cx="5.2" cy="2.6" r="1.6" fill="#d8262a"/></svg>
<svg style="position:absolute;left:25px;top:115.4px;" width="8" height="7" viewBox="0 0 8 7"><path d="M0.5 6.2 V1.4 Q0.9 0.4 1.9 1 L3.7 3.2 L5.5 1 Q6.5 0.4 6.9 1.4 V6.2 Q6.4 6.9 5.5 6.3 V3.9 L3.7 5.8 L1.9 3.9 V6.3 Q1 6.9 0.5 6.2Z" fill="#5cc424" stroke="#3a9a14" stroke-width="0.5"/><path d="M1.2 1.8 V5.6 M6.2 1.8 V5.6" stroke="#b8f090" stroke-width="0.5"/></svg>
<div style="position:absolute;left:1.8px;top:279.8px;width:225px;height:205px;background:#fff;border:1px solid #c4c6ca;box-sizing:border-box"></div>
<div style="position:absolute;left:2.8px;top:280.8px;width:223px;height:11.2px;background:linear-gradient(180deg,#ffffff 0%,#fbfbfc 40%,#f0f1f3 100%)"></div>
<div style="position:absolute;left:55.6px;top:280.5px;width:0.8px;height:11.6px;background:#e4e5e8"></div>
<div style="position:absolute;left:2.8px;top:291.6px;width:223px;height:0.8px;background:#e6e7ea"></div>
<svg style="position:absolute;left:0px;top:484.2px;" width="62" height="11" viewBox="0 0 62 11"><path d="M1.8 0.4 Q2.6 2 3.4 6.2 Q4.2 8.6 6.6 8.6 H28.4 Q30.4 8.6 31 6.6 L32.8 0.6" fill="#f2f2f2" stroke="#8c8c8c" stroke-width="0.8"/><path d="M32.6 0.6 Q34 2.4 35.2 7 Q36 9.2 38.2 9.2 H54.8 Q56.8 9.2 57.4 7.2 L60.6 0.4" fill="#fff" stroke="#7e7e7e" stroke-width="0.8"/></svg>
<div style="position:absolute;left:230px;top:59px;width:2.7px;height:437px;background:linear-gradient(90deg,#f0f0f0,#fafafa)"></div>
<div style="position:absolute;left:232.7px;top:59px;width:791.3px;height:423.6px;background:linear-gradient(180deg,#333364 0%,#666684 50%,#9494a9 100%)"></div>
<svg style="position:absolute;left:0;top:0" width="1024" height="576" viewBox="0 0 1024 576"><defs><clipPath id="vc"><rect x="232.7" y="59" width="791.3" height="423.6"/></clipPath></defs><g clip-path="url(#vc)"><g fill="none" stroke="#0a0a14" stroke-width="0.7" stroke-linejoin="round"><polygon points="795.75,274.90 794.95,259.56 792.54,244.38 788.57,229.54 783.06,215.19 776.08,201.50 767.71,188.61 758.04,176.67 747.18,165.81 735.24,156.14 722.35,147.77 708.66,140.79 694.31,135.28 679.47,131.31 664.29,128.90 648.95,128.10 633.61,128.90 618.43,131.31 603.59,135.28 589.24,140.79 575.55,147.77 562.66,156.14 550.72,165.81 539.86,176.67 530.19,188.61 521.82,201.50 514.84,215.19 509.33,229.54 505.36,244.38 502.95,259.56 502.15,274.90 502.95,290.24 505.36,305.42 509.33,320.26 514.84,334.61 521.82,348.30 530.19,361.19 539.86,373.13 550.72,383.99 562.66,393.66 575.55,402.03 589.24,409.01 603.59,414.52 618.43,418.49 633.61,420.90 648.95,421.70 664.29,420.90 679.47,418.49 694.31,414.52 708.66,409.01 722.35,402.03 735.24,393.66 747.18,383.99 758.04,373.13 767.71,361.19 776.08,348.30 783.06,334.61 788.57,320.26 792.54,305.42 794.95,290.24"/><polygon points="787.95,274.90 780.80,246.87 777.15,233.24 772.10,220.07 765.69,207.50 758.01,195.67 749.13,184.70 739.15,174.72 718.45,154.52 690.61,146.70 676.98,143.05 663.04,140.84 648.95,140.10 634.86,140.84 620.92,143.05 607.29,146.70 579.45,154.52 558.75,174.72 548.77,184.70 539.89,195.67 532.21,207.50 525.80,220.07 520.75,233.24 517.10,246.87 509.95,274.90 517.10,302.93 520.75,316.56 525.80,329.73 532.21,342.30 539.89,354.13 548.77,365.10 558.75,375.08 579.45,395.28 607.29,403.10 620.92,406.75 634.86,408.96 648.95,409.70 663.04,408.96 676.98,406.75 690.61,403.10 718.45,395.28 739.15,375.08 749.13,365.10 758.01,354.13 765.69,342.30 772.10,329.73 777.15,316.56 780.80,302.93"/><polygon points="682.20,274.80 681.56,268.32 679.67,262.09 676.60,256.36 672.48,251.32 667.44,247.20 661.71,244.13 655.48,242.24 649.00,241.60 642.52,242.24 636.29,244.13 630.56,247.20 625.52,251.32 621.40,256.36 618.33,262.09 616.44,268.32 615.80,274.80 616.44,281.28 618.33,287.51 621.40,293.24 625.52,298.28 630.56,302.40 636.29,305.47 642.52,307.36 649.00,308.00 655.48,307.36 661.71,305.47 667.44,302.40 672.48,298.28 676.60,293.24 679.67,287.51 681.56,281.28"/><polygon points="672.09,272.54 671.20,268.08 669.47,263.87 666.94,260.09 663.73,256.87 659.95,254.34 655.74,252.60 651.28,251.71 646.74,251.71 642.28,252.60 638.07,254.33 634.29,256.86 631.07,260.07 628.54,263.85 626.80,268.06 625.91,272.52 625.91,277.06 626.80,281.52 628.53,285.73 631.06,289.51 634.27,292.73 638.05,295.26 642.26,297.00 646.72,297.89 651.26,297.89 655.72,297.00 659.93,295.27 663.71,292.74 666.93,289.53 669.46,285.75 671.20,281.54 672.09,277.08"/><path d="M795.8 274.9L788.0 274.9M792.5 244.4L780.8 246.9M788.6 229.5L777.2 233.2M783.1 215.2L772.1 220.1M776.1 201.5L765.7 207.5M767.7 188.6L758.0 195.7M758.0 176.7L749.1 184.7M747.2 165.8L739.1 174.7M722.4 147.8L718.5 154.5M694.3 135.3L690.6 146.7M679.5 131.3L677.0 143.0M664.3 128.9L663.0 140.8M649.0 128.1L649.0 140.1M633.6 128.9L634.9 140.8M618.4 131.3L620.9 143.0M603.6 135.3L607.3 146.7M575.6 147.8L579.5 154.5M550.7 165.8L558.8 174.7M539.9 176.7L548.8 184.7M530.2 188.6L539.9 195.7M521.8 201.5L532.2 207.5M514.8 215.2L525.8 220.1M509.3 229.5L520.7 233.2M505.4 244.4L517.1 246.9M502.2 274.9L510.0 274.9M505.4 305.4L517.1 302.9M509.3 320.3L520.7 316.6M514.8 334.6L525.8 329.7M521.8 348.3L532.2 342.3M530.2 361.2L539.9 354.1M539.9 373.1L548.8 365.1M550.7 384.0L558.8 375.1M575.5 402.0L579.5 395.3M603.6 414.5L607.3 403.1M618.4 418.5L620.9 406.8M633.6 420.9L634.9 409.0M649.0 421.7L649.0 409.7M664.3 420.9L663.0 409.0M679.5 418.5L677.0 406.8M694.3 414.5L690.6 403.1M722.4 402.0L718.5 395.3M747.2 384.0L739.1 375.1M758.0 373.1L749.1 365.1M767.7 361.2L758.0 354.1M776.1 348.3L765.7 342.3M783.1 334.6L772.1 329.7M788.6 320.3L777.2 316.6M792.5 305.4L780.8 302.9M794.9 259.6L788.0 274.9M794.9 259.6L780.8 246.9M792.5 244.4L777.2 233.2M788.6 229.5L772.1 220.1M783.1 215.2L765.7 207.5M765.7 207.5L767.7 188.6M758.0 195.7L758.0 176.7M749.1 184.7L747.2 165.8M739.1 174.7L735.2 156.1M735.2 156.1L718.5 154.5M708.7 140.8L718.5 154.5M708.7 140.8L690.6 146.7M694.3 135.3L677.0 143.0M679.5 131.3L663.0 140.8M664.3 128.9L649.0 140.1M649.0 140.1L633.6 128.9M634.9 140.8L618.4 131.3M620.9 143.0L603.6 135.3M607.3 146.7L589.2 140.8M589.2 140.8L579.5 154.5M562.7 156.1L579.5 154.5M562.7 156.1L558.8 174.7M550.7 165.8L548.8 184.7M539.9 176.7L539.9 195.7M530.2 188.6L532.2 207.5M532.2 207.5L514.8 215.2M525.8 220.1L509.3 229.5M520.7 233.2L505.4 244.4M517.1 246.9L503.0 259.6M503.0 259.6L510.0 274.9M503.0 290.2L510.0 274.9M503.0 290.2L517.1 302.9M505.4 305.4L520.7 316.6M509.3 320.3L525.8 329.7M514.8 334.6L532.2 342.3M532.2 342.3L530.2 361.2M539.9 354.1L539.9 373.1M548.8 365.1L550.7 384.0M558.8 375.1L562.7 393.7M562.7 393.7L579.5 395.3M589.2 409.0L579.5 395.3M589.2 409.0L607.3 403.1M603.6 414.5L620.9 406.8M618.4 418.5L634.9 409.0M633.6 420.9L649.0 409.7M649.0 409.7L664.3 420.9M663.0 409.0L679.5 418.5M677.0 406.8L694.3 414.5M690.6 403.1L708.7 409.0M708.7 409.0L718.5 395.3M735.2 393.7L718.5 395.3M735.2 393.7L739.1 375.1M747.2 384.0L749.1 365.1M758.0 373.1L758.0 354.1M767.7 361.2L765.7 342.3M765.7 342.3L783.1 334.6M772.1 329.7L788.6 320.3M777.2 316.6L792.5 305.4M780.8 302.9L794.9 290.2M794.9 290.2L788.0 274.9M788.0 274.9L718.5 154.5M718.5 154.5L579.5 154.5M579.5 154.5L510.0 274.9M510.0 274.9L579.5 395.3M579.5 395.3L718.5 395.3M718.5 395.3L788.0 274.9M780.8 246.9L739.1 174.7M788.0 274.9L739.1 174.7M718.5 154.5L780.8 246.9M780.8 246.9L765.7 207.5M739.1 174.7L765.7 207.5M690.6 146.7L607.3 146.7M718.5 154.5L607.3 146.7M579.5 154.5L690.6 146.7M690.6 146.7L649.0 140.1M607.3 146.7L649.0 140.1M558.8 174.7L517.1 246.9M579.5 154.5L517.1 246.9M510.0 274.9L558.8 174.7M558.8 174.7L532.2 207.5M517.1 246.9L532.2 207.5M517.1 302.9L558.8 375.1M510.0 274.9L558.8 375.1M579.5 395.3L517.1 302.9M517.1 302.9L532.2 342.3M558.8 375.1L532.2 342.3M607.3 403.1L690.6 403.1M579.5 395.3L690.6 403.1M718.5 395.3L607.3 403.1M607.3 403.1L649.0 409.7M690.6 403.1L649.0 409.7M739.1 375.1L780.8 302.9M718.5 395.3L780.8 302.9M788.0 274.9L739.1 375.1M739.1 375.1L765.7 342.3M780.8 302.9L765.7 342.3M682.2 274.8L672.1 272.5M672.1 272.5L681.6 268.3M681.6 268.3L671.2 268.1M671.2 268.1L679.7 262.1M679.7 262.1L669.5 263.9M669.5 263.9L676.6 256.4M676.6 256.4L666.9 260.1M666.9 260.1L672.5 251.3M672.5 251.3L663.7 256.9M663.7 256.9L667.4 247.2M667.4 247.2L659.9 254.3M659.9 254.3L661.7 244.1M661.7 244.1L655.7 252.6M655.7 252.6L655.5 242.2M655.5 242.2L651.3 251.7M651.3 251.7L649.0 241.6M649.0 241.6L646.7 251.7M646.7 251.7L642.5 242.2M642.5 242.2L642.3 252.6M642.3 252.6L636.3 244.1M636.3 244.1L638.1 254.3M638.1 254.3L630.6 247.2M630.6 247.2L634.3 256.9M634.3 256.9L625.5 251.3M625.5 251.3L631.1 260.1M631.1 260.1L621.4 256.4M621.4 256.4L628.5 263.9M628.5 263.9L618.3 262.1M618.3 262.1L626.8 268.1M626.8 268.1L616.4 268.3M616.4 268.3L625.9 272.5M625.9 272.5L615.8 274.8M615.8 274.8L625.9 277.1M625.9 277.1L616.4 281.3M616.4 281.3L626.8 281.5M626.8 281.5L618.3 287.5M618.3 287.5L628.5 285.7M628.5 285.7L621.4 293.2M621.4 293.2L631.1 289.5M631.1 289.5L625.5 298.3M625.5 298.3L634.3 292.7M634.3 292.7L630.6 302.4M630.6 302.4L638.1 295.3M638.1 295.3L636.3 305.5M636.3 305.5L642.3 297.0M642.3 297.0L642.5 307.4M642.5 307.4L646.7 297.9M646.7 297.9L649.0 308.0M649.0 308.0L651.3 297.9M651.3 297.9L655.5 307.4M655.5 307.4L655.7 297.0M655.7 297.0L661.7 305.5M661.7 305.5L659.9 295.3M659.9 295.3L667.4 302.4M667.4 302.4L663.7 292.7M663.7 292.7L672.5 298.3M672.5 298.3L666.9 289.5M666.9 289.5L676.6 293.2M676.6 293.2L669.5 285.7M669.5 285.7L679.7 287.5M679.7 287.5L671.2 281.5M671.2 281.5L681.6 281.3M681.6 281.3L672.1 277.1M672.1 277.1L682.2 274.8M682.0 271.6L671.8 270.3M674.7 253.7L665.4 258.4M658.7 243.0L653.5 252.0M639.4 243.0L640.1 253.4M623.3 253.7L629.7 261.9M616.0 271.5L625.8 274.8M619.7 290.4L629.7 287.7M633.3 304.1L640.1 296.2M652.2 307.8L653.5 297.6M670.1 300.5L665.4 291.2M680.8 284.5L671.8 279.3M627.8 154.5L627.8 395.3M670.3 154.5L670.3 395.3M615.8 274.8L682.2 274.8M607.3 146.7L627.8 154.5M690.6 403.1L670.1 395.3M690.6 146.7L670.3 154.5M607.3 403.1L627.6 395.3M627.8 154.5L690.6 146.7M670.1 395.3L607.3 403.1M627.8 154.5L631.9 246.3M670.1 395.3L666.0 303.5M627.8 154.5L637.1 243.8M670.1 395.3L660.8 306.0M627.8 154.5L642.7 242.2M670.1 395.3L655.2 307.6M627.8 154.5L647.8 241.6M670.1 395.3L650.1 308.2M670.3 154.5L647.8 241.6M627.6 395.3L650.1 308.2M670.3 154.5L670.3 239.0M627.6 395.3L627.6 310.8M742.0 197.6L670.3 239.0M555.9 352.2L627.6 310.8M742.0 197.6L675.9 255.3M555.9 352.2L622.0 294.5M742.0 197.6L739.1 174.7M555.9 352.2L558.8 375.1M763.6 233.6L780.8 246.9M534.3 316.2L517.1 302.9M763.6 233.6L675.2 254.4M534.3 316.2L622.7 295.4M763.6 233.6L677.8 258.2M534.3 316.2L620.1 291.6M763.6 233.6L679.8 262.4M534.3 316.2L618.1 287.4M763.6 233.6L681.2 266.8M534.3 316.2L616.7 283.0M763.6 233.6L682.0 271.3M534.3 316.2L615.9 278.5M763.6 233.6L682.2 276.0M534.3 316.2L615.7 273.8M670.3 239.0L660.4 243.6M627.6 310.8L637.5 306.2M670.3 239.0L670.3 249.4M627.6 310.8L627.6 300.4M670.3 239.0L677.8 258.2M627.6 310.8L620.1 291.6M626.6 268.8L670.0 265.0M671.3 281.0L627.9 284.8M626.6 280.8L663.9 257.0M671.3 269.0L634.0 292.8M635.7 255.8L651.0 297.9M662.2 294.0L646.9 251.9M631.2 259.9L672.1 272.8M666.7 289.9L625.8 277.0"/></g></g></svg>
<svg style="position:absolute;left:986px;top:444px;" width="24" height="22" viewBox="0 0 24 22"><path d="M16.5 18.5 H2.5" stroke="#a81414" stroke-width="1"/><path d="M2 18.5 L5.6 16.9 L5.6 20.1Z" fill="#a81414"/><path d="M16.5 18.5 V4.2" stroke="#18901a" stroke-width="1"/><path d="M16.5 3.6 L14.9 7.4 H18.1Z" fill="#18901a"/><rect x="16" y="18" width="1" height="1" fill="#2a3aa0"/></svg>
<div style="position:absolute;left:233px;top:482.6px;width:791px;height:12.7px;background:#f0f0f0"></div>
<div style="position:absolute;left:232.7px;top:482.6px;width:69.7px;height:12.7px;background:#fff;border:1px solid #b8b8b8;border-top:none;box-sizing:border-box"></div>
<svg style="position:absolute;left:238.8px;top:485px;" width="10" height="9" viewBox="0 0 10 9"><path d="M0.2 0.2 H4.8 V1.9 H2.1 V3.8 H4.2 V5.4 H2.1 V8 H0.2Z" fill="#d01c20"/><g transform="translate(5.9 5.1)"><circle r="2.1" fill="#3a68b0"/><path d="M-0.6 -2.9 H0.6 V2.9 H-0.6Z M-2.9 -0.6 V0.6 H2.9 V-0.6Z M-2.1 -1.3 L-1.3 -2.1 L2.1 1.3 L1.3 2.1Z M2.1 -1.3 L1.3 -2.1 L-2.1 1.3 L-1.3 2.1Z" fill="#3a68b0"/><circle r="0.8" fill="#e8eef6"/></g></svg>
<svg style="position:absolute;left:287.4px;top:485.7px;" width="7.6" height="7.6" viewBox="0 0 7.6 7.6"><rect x="0" y="0" width="7.6" height="7.6" rx="1.2" fill="#e8744a"/><path d="M2.2 2.2 L5.4 5.4 M5.4 2.2 L2.2 5.4" stroke="#fff" stroke-width="1.1"/></svg>
<div style="position:absolute;left:0px;top:495.5px;width:1024px;height:80.5px;background:#f0f0f0"></div>
<div style="position:absolute;left:0px;top:498.3px;width:1024px;height:10.3px;background:linear-gradient(180deg,#d4d4d4 0%,#dcdcdc 20%,#dadada 85%,#cfcfcf 100%)"></div>
<svg style="position:absolute;left:1006px;top:500.2px;" width="18" height="8" viewBox="0 0 18 8"><rect x="2.6" y="3" width="3" height="2.8" fill="none" stroke="#111" stroke-width="0.9"/><path d="M3.9 2.6 V1.4 H6.7 V4.2 H5.9" fill="none" stroke="#111" stroke-width="0.8"/><path d="M11.2 1.8 L15 5.4 M15 1.8 L11.2 5.4" stroke="#111" stroke-width="0.9"/></svg>
<div style="position:absolute;left:0.3px;top:510px;width:1023.7px;height:37.5px;border:1px solid #b0b0b0;border-right:none;box-sizing:border-box;background:#f0f0f0"></div>
<svg style="position:absolute;left:2.5px;top:520.5px;" width="13" height="16" viewBox="0 0 13 16"><path d="M1.4 1.4 H9.6 L12.6 4.4 V15.6 H1.4Z" fill="#c8c8c8" opacity="0.6"/><path d="M0.8 0.8 H9 L12 3.8 V15 H0.8Z" fill="#fafaf8" stroke="#c8c8c4" stroke-width="0.6"/><path d="M9 0.8 V3.8 H12" fill="#e0e0dc" stroke="#c4c4c0" stroke-width="0.5"/></svg>
<div style="position:absolute;left:1000.3px;top:522.2px;width:13.3px;height:11.6px;background:linear-gradient(180deg,#f4f4f4,#dcdcdc);border:1px solid #8e8e8e;border-radius:1.5px;box-sizing:border-box"></div>
<svg style="position:absolute;left:1002.5px;top:524.5px;" width="9" height="7" viewBox="0 0 9 7"><path d="M0.5 1 H3.4 L4.2 2 H8.5 V6.5 H0.5Z" fill="#4a86c8"/><path d="M0.5 2.6 H8.5 V6.5 H0.5Z" fill="#6aa3dc"/></svg>
<div style="position:absolute;left:1015px;top:510.5px;width:9px;height:36.6px;background:#eaeaea;border-left:1px solid #dcdcdc;box-sizing:border-box"></div>
<div style="position:absolute;left:1015.6px;top:520.4px;width:7px;height:8px;background:linear-gradient(90deg,#fbfbfb,#d4d4d4);border:0.7px solid #bcbcbc;box-sizing:border-box;border-radius:1px"></div>
<div style="position:absolute;left:1023px;top:510.5px;width:1px;height:37px;background:#b4b4b4"></div>
<svg style="position:absolute;left:1017px;top:513px;" width="6" height="4" viewBox="0 0 6 4"><path d="M0.8 3.2 L3 0.8 L5.2 3.2Z" fill="#555"/></svg>
<svg style="position:absolute;left:1017px;top:540.5px;" width="6" height="4" viewBox="0 0 6 4"><path d="M0.8 0.8 L3 3.2 L5.2 0.8Z" fill="#555"/></svg>
<div style="position:absolute;left:1px;top:548.6px;width:38.5px;height:10.8px;background:linear-gradient(180deg,#f8f8f8,#e0e0e0);border:1px solid #a0a0a0;border-radius:2px;box-sizing:border-box"></div>
<svg style="position:absolute;left:914.5px;top:563.5px;" width="10" height="10" viewBox="0 0 10 10"><path d="M2 4 A3 3 0 0 1 7.5 2.6" fill="none" stroke="#222" stroke-width="1"/><path d="M8 6 A3 3 0 0 1 2.5 7.4" fill="none" stroke="#222" stroke-width="1"/><circle cx="7.8" cy="2.6" r="1.2" fill="#222"/><circle cx="2.2" cy="7.4" r="1.2" fill="#222"/></svg>
<svg style="position:absolute;left:945px;top:566.8px;" width="5" height="4" viewBox="0 0 5 4"><path d="M0.2 0.4 H4 L2.1 2.6Z" fill="#111"/></svg>
<div style="position:absolute;left:953px;top:563px;width:0.8px;height:10px;background:#d8d8d8"></div>
<div style="position:absolute;left:0px;top:574.6px;width:1024px;height:1.4px;background:#8090a0"></div>
<svg style="position:absolute;left:0;top:0" width="1024" height="576" font-family="Liberation Sans"><text x="11.40" y="8" font-size="6.58" fill="#141414" stroke="#141414" stroke-width="0.12" textLength="24.20" lengthAdjust="spacingAndGlyphs">FreeCAD</text><text x="4.60" y="19" font-size="6.86" fill="#101010" stroke="#101010" stroke-width="0.18" textLength="13.90" lengthAdjust="spacingAndGlyphs">Datei</text><text x="27.70" y="19" font-size="6.86" fill="#101010" stroke="#101010" stroke-width="0.18" textLength="29.00" lengthAdjust="spacingAndGlyphs">Bearbeiten</text><text x="65.80" y="19" font-size="6.86" fill="#101010" stroke="#101010" stroke-width="0.18" textLength="20.40" lengthAdjust="spacingAndGlyphs">Ansicht</text><text x="95.60" y="19" font-size="6.86" fill="#101010" stroke="#101010" stroke-width="0.18" textLength="30.40" lengthAdjust="spacingAndGlyphs">Werkzeuge</text><text x="135.40" y="19" font-size="6.86" fill="#101010" stroke="#101010" stroke-width="0.18" textLength="17.60" lengthAdjust="spacingAndGlyphs">Makro</text><text x="161.80" y="19" font-size="6.86" fill="#101010" stroke="#101010" stroke-width="0.18" textLength="19.90" lengthAdjust="spacingAndGlyphs">Fenster</text><text x="191.10" y="19" font-size="6.86" fill="#101010" stroke="#101010" stroke-width="0.18" textLength="12.30" lengthAdjust="spacingAndGlyphs">Hilfe</text><text x="232.00" y="34" font-size="5.90" fill="#101010" stroke="#101010" stroke-width="0.12" textLength="12.80" lengthAdjust="spacingAndGlyphs">Start</text><text x="1.30" y="67" font-size="6.04" fill="#1a1a1a" stroke="#1a1a1a" stroke-width="0.12" textLength="37.60" lengthAdjust="spacingAndGlyphs">Combo-Ansicht</text><text x="6.10" y="79" font-size="6.31" fill="#1a1a1a" stroke="#1a1a1a" stroke-width="0.12" textLength="15.70" lengthAdjust="spacingAndGlyphs">Modell</text><text x="35.20" y="80" font-size="6.58" fill="#1a1a1a" stroke="#1a1a1a" stroke-width="0.12" textLength="24.70" lengthAdjust="spacingAndGlyphs">Aufgaben</text><text x="4.20" y="92" font-size="6.45" fill="#1c1c1c" stroke="#1c1c1c" stroke-width="0.12" textLength="90.30" lengthAdjust="spacingAndGlyphs">Bezeichnungen &amp; Eigenschaften</text><text x="3.30" y="102" font-size="6.72" fill="#1c1c1c" stroke="#1c1c1c" stroke-width="0.12" textLength="32.20" lengthAdjust="spacingAndGlyphs">Applikation</text><text x="26.00" y="112" font-size="6.86" fill="#101010" font-weight="bold" textLength="27.90" lengthAdjust="spacingAndGlyphs">Unnamed</text><text x="36.50" y="121" font-size="6.86" fill="#101010" font-weight="bold" textLength="37.30" lengthAdjust="spacingAndGlyphs">rad_version3</text><text x="5.20" y="289" font-size="6.31" fill="#1c1c1c" stroke="#1c1c1c" stroke-width="0.12" textLength="31.80" lengthAdjust="spacingAndGlyphs">Eigenschaft</text><text x="58.30" y="289" font-size="6.31" fill="#1c1c1c" stroke="#1c1c1c" stroke-width="0.12" textLength="12.70" lengthAdjust="spacingAndGlyphs">Wert</text><text x="7.60" y="492" font-size="5.76" fill="#1c1c1c" stroke="#1c1c1c" stroke-width="0.12" textLength="17.60" lengthAdjust="spacingAndGlyphs">Ansicht</text><text x="38.90" y="492" font-size="5.49" fill="#1c1c1c" stroke="#1c1c1c" stroke-width="0.12" textLength="15.00" lengthAdjust="spacingAndGlyphs">Daten</text><text x="1005.40" y="448" font-size="5.49" fill="#111" textLength="3.60" lengthAdjust="spacingAndGlyphs">Y</text><text x="990.20" y="461" font-size="5.49" fill="#111" textLength="3.60" lengthAdjust="spacingAndGlyphs">X</text><text x="1004.60" y="463" font-size="5.76" fill="#111" textLength="3.60" lengthAdjust="spacingAndGlyphs">Z</text><text x="249.30" y="492" font-size="6.04" fill="#1c1c1c" stroke="#1c1c1c" stroke-width="0.12" textLength="35.70" lengthAdjust="spacingAndGlyphs">Unnamed : 1*</text><text x="1.00" y="506" font-size="5.76" fill="#1a1a1a" stroke="#1a1a1a" stroke-width="0.12" textLength="48.30" lengthAdjust="spacingAndGlyphs">Download Manager</text><text x="21.10" y="521" font-size="6.31" fill="#1c1c1c" stroke="#1c1c1c" stroke-width="0.12" textLength="52.60" lengthAdjust="spacingAndGlyphs">rad_version3.FCStd</text><text x="21.10" y="540" font-size="6.45" fill="#7c7c7c" stroke="#7c7c7c" stroke-width="0.12" textLength="17.60" lengthAdjust="spacingAndGlyphs">105 kB</text><text x="6.00" y="556" font-size="5.90" fill="#101010" stroke="#101010" stroke-width="0.12" textLength="27.80" lengthAdjust="spacingAndGlyphs">Aufräumen</text><text x="496.10" y="556" font-size="6.17" fill="#1c1c1c" stroke="#1c1c1c" stroke-width="0.12" textLength="31.90" lengthAdjust="spacingAndGlyphs">2 Downloads</text><text x="3.90" y="571" font-size="6.45" fill="#181818" stroke="#181818" stroke-width="0.12" textLength="206.70" lengthAdjust="spacingAndGlyphs">Preselected: Unnamed.rad_version3.Main (-29.238676,-15.036675,0.000000)</text><text x="926.20" y="571" font-size="6.86" fill="#1c1c1c" stroke="#1c1c1c" stroke-width="0.12" textLength="17.70" lengthAdjust="spacingAndGlyphs">Gestur</text><text x="955.90" y="571" font-size="6.72" fill="#1c1c1c" stroke="#1c1c1c" stroke-width="0.12" textLength="66.50" lengthAdjust="spacingAndGlyphs">188,52 mm x 101,00 mm</text></svg>
</body></html>
